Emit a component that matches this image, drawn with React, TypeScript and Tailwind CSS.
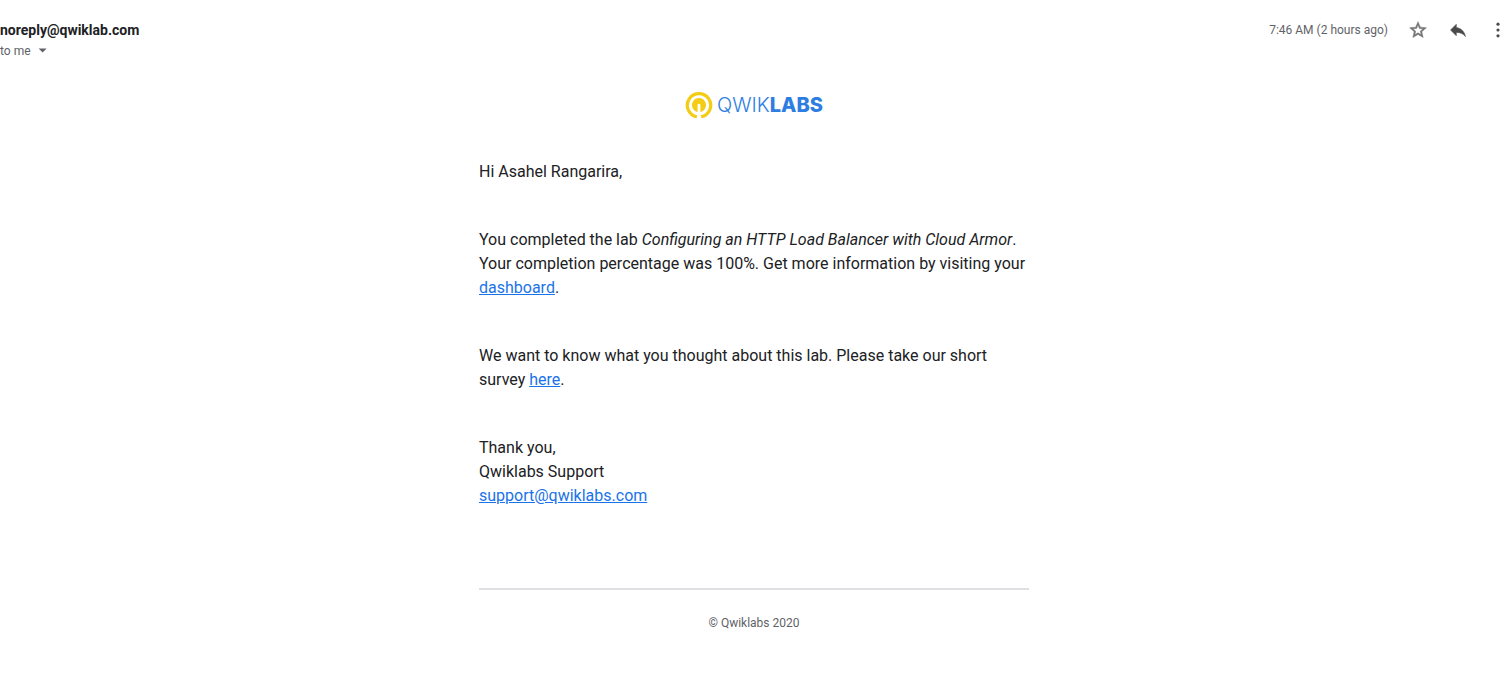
import type { ReactNode } from "react";

function IconButton({ label, children }: { label: string; children: ReactNode }) {
  return (
    <button type="button" aria-label={label} className="flex size-5 items-center justify-center">
      <svg viewBox="0 0 24 24" className="size-5" fill="currentColor" aria-hidden="true">
        {children}
      </svg>
    </button>
  );
}

function MessageHeader() {
  return (
    <header className="flex items-start justify-between">
      <div>
        <h1 className="text-sm font-bold leading-5 text-[#202124]">noreply@qwiklab.com</h1>
        <button type="button" className="flex h-[22px] items-center gap-1 text-xs text-[#5f6368]">
          to me
          <svg viewBox="0 0 20 20" className="size-4" fill="currentColor" aria-hidden="true">
            <path d="M4.5 7l5 5 5-5z" />
          </svg>
        </button>
      </div>
      <div className="flex items-center gap-5 text-[#4a4a4a]">
        <time className="text-xs leading-5 text-[#5f6368]">7:46 AM (2 hours ago)</time>
        <IconButton label="Star">
          <path
            fill="#737373"
            stroke="#737373"
            strokeWidth="0.6"
            d="M22 9.24l-7.19-.62L12 2 9.19 8.63 2 9.24l5.46 4.73L5.82 21 12 17.27 18.18 21l-1.63-7.03L22 9.24zM12 15.4l-3.76 2.27 1-4.28-3.32-2.88 4.38-.38L12 6.1l1.71 4.04 4.38.38-3.32 2.88 1 4.28L12 15.4z"
          />
        </IconButton>
        <IconButton label="Reply">
          <path
            stroke="currentColor"
            strokeWidth="0.6"
            d="M10 9V5l-7 7 7 7v-4.1c5 0 8.5 1.6 11 5.1-1-5-4-10-11-11z"
          />
        </IconButton>
        <IconButton label="More">
          <circle cx="12" cy="5" r="1.9" />
          <circle cx="12" cy="12" r="1.9" />
          <circle cx="12" cy="19" r="1.9" />
        </IconButton>
      </div>
    </header>
  );
}

function Logo() {
  return (
    <div className="flex h-7 items-center justify-center gap-1">
      <svg viewBox="0 0 28 28" className="size-7" fill="none" aria-hidden="true">
        <path d="M11.9 25.8A11.7 11.7 0 1 1 16.1 25.8" stroke="#f4cc13" strokeWidth="3.2" />
        <path
          d="M12.6 20.9A7 7 0 1 1 15.4 20.9V14.2A1.4 1.4 0 0 0 12.6 14.2Z"
          fill="#f4cc13"
        />
      </svg>
      <span className="font-['Inter',sans-serif] text-xl leading-6 text-[#2e7de1]">
        <span className="font-light">QWIK</span>
        <span className="font-extrabold">LABS</span>
      </span>
    </div>
  );
}

function TextLink({ href, children }: { href: string; children: ReactNode }) {
  return (
    <a href={href} className="text-[#1a73e8] underline">
      {children}
    </a>
  );
}

export default function App() {
  return (
    <div className="bg-white pt-5 pb-10 font-['Roboto',sans-serif] text-[#202124]">
      <MessageHeader />
      <main className="mx-auto mt-[29px] max-w-[550px]">
        <Logo />
        <div className="mt-[41px] flex flex-col gap-11 text-base leading-6">
          <p>Hi Asahel Rangarira,</p>
          <p>
            You completed the lab <em>Configuring an HTTP Load Balancer with Cloud Armor</em>. Your
            completion percentage was 100%. Get more information by visiting your{" "}
            <TextLink href="#dashboard">dashboard</TextLink>.
          </p>
          <p>
            We want to know what you thought about this lab. Please take our short survey{" "}
            <TextLink href="#survey">here</TextLink>.
          </p>
          <p>
            Thank you,
            <br />
            Qwiklabs Support
            <br />
            <TextLink href="mailto:support@qwiklabs.com">support@qwiklabs.com</TextLink>
          </p>
        </div>
        <footer className="mt-20 border-t-2 border-[#e0e0e4] pt-6 text-center text-xs leading-[18px] text-[#5f6368]">
          © Qwiklabs 2020
        </footer>
      </main>
    </div>
  );
}
